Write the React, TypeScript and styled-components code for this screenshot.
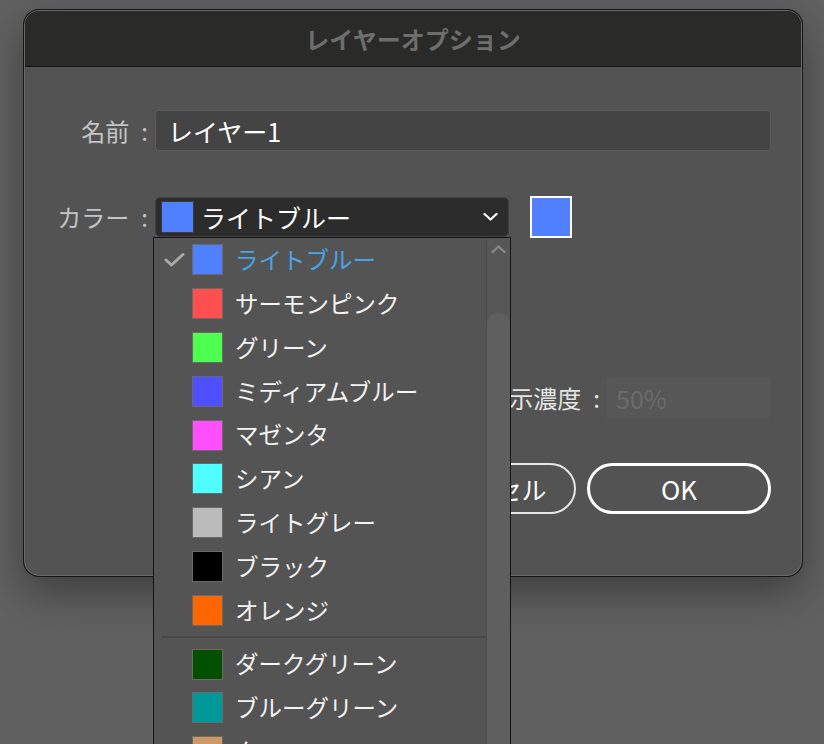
import React from 'react';
import styled, { createGlobalStyle } from 'styled-components';

interface ILayerColor {
  name: string;
  hex: string;
}

// Illustrator layer colours, split by the separator
const mainColors: ILayerColor[] = [
  { name: 'ライトブルー', hex: '#4f80ff' },
  { name: 'サーモンピンク', hex: '#ff4f4f' },
  { name: 'グリーン', hex: '#4fff4f' },
  { name: 'ミディアムブルー', hex: '#4f4fff' },
  { name: 'マゼンタ', hex: '#ff4fff' },
  { name: 'シアン', hex: '#4fffff' },
  { name: 'ライトグレー', hex: '#bbbbbb' },
  { name: 'ブラック', hex: '#000000' },
  { name: 'オレンジ', hex: '#ff6600' },
];

const extraColors: ILayerColor[] = [
  { name: 'ダークグリーン', hex: '#005000' },
  { name: 'ブルーグリーン', hex: '#009999' },
  { name: 'タン', hex: '#cc9966' },
  { name: 'ブラウン', hex: '#993300' },
];

const selected = 'ライトブルー';

const Check = () => (
  <svg width='21' height='14' viewBox='0 0 21 14'>
    <polyline points='2,7 7.5,12 19,1.5' fill='none' stroke='#a9a9a9' strokeWidth='3' strokeLinecap='round' strokeLinejoin='round' />
  </svg>
);

const Chevron = ({ up, color }: { up?: boolean; color: string }) => (
  <svg width='15' height='8' viewBox='0 0 15 8'>
    <polyline
      points={up ? '1.5,7 7.5,1.5 13.5,7' : '1.5,1 7.5,6.5 13.5,1'}
      fill='none'
      stroke={color}
      strokeWidth='2.2'
      strokeLinecap='round'
      strokeLinejoin='round'
    />
  </svg>
);

const ColorItem = ({ name, hex }: ILayerColor) => {
  const active = name === selected;
  return (
    <Item>
      <CheckSlot>{active && <Check />}</CheckSlot>
      <ItemSwatch $color={hex} />
      <ItemLabel $active={active}>{name}</ItemLabel>
    </Item>
  );
};

const CheckOption = ({ label }: { label: string }) => (
  <OptionLabel>
    <CheckBox />
    {label}
  </OptionLabel>
);

const App = () => {
  return (
    <>
      <GlobalStyle />
      <Page>
        <Dialog>
          <TitleBar>レイヤーオプション</TitleBar>
          <Body>
            <FieldRow>
              <FieldLabel>名前{'\u2002'}:</FieldLabel>
              <TextInput readOnly value='レイヤー1' />
            </FieldRow>
            <FieldRow $gap={45}>
              <FieldLabel>カラー{'\u2002'}:</FieldLabel>
              <SelectWrap>
                <Select>
                  <SelectSwatch />
                  <SelectText>ライトブルー</SelectText>
                  <SelectArrow>
                    <Chevron color='#ffffff' />
                  </SelectArrow>
                </Select>
                <Dropdown>
                  <List>
                    {mainColors.map((c) => (
                      <ColorItem key={c.name} {...c} />
                    ))}
                    <Separator />
                    {extraColors.map((c) => (
                      <ColorItem key={c.name} {...c} />
                    ))}
                  </List>
                  <Track>
                    <TrackArrow>
                      <Chevron up color='#8a8a8a' />
                    </TrackArrow>
                    <Thumb />
                  </Track>
                </Dropdown>
              </SelectWrap>
              <ColorChip />
            </FieldRow>
            <Options>
              <OptionRow>
                <CheckOption label='テンプレート' />
                <CheckOption label='ロック' />
              </OptionRow>
              <OptionRow>
                <CheckOption label='表示' />
                <CheckOption label='プリント' />
              </OptionRow>
            </Options>
            <DimRow>
              <CheckOption label='プレビュー' />
              <DimGroup>
                <CheckBox />
                <DimLabel>画像の表示濃度{'\u2002'}:</DimLabel>
                <DimInput readOnly value='50%' />
              </DimGroup>
            </DimRow>
            <Buttons>
              <PillButton $primary={false}>キャンセル</PillButton>
              <PillButton $primary>OK</PillButton>
            </Buttons>
          </Body>
        </Dialog>
      </Page>
    </>
  );
};

const GlobalStyle = createGlobalStyle`
  html, body {
    margin: 0;
    padding: 0;
    height: 100%;
    overflow: hidden;
  }
  body {
    background: #616161;
    font-family: 'Noto Sans CJK JP', 'Noto Sans', sans-serif;
  }
  * {
    box-sizing: border-box;
  }
`;

const Page = styled.div`
  padding: 10px 0 0 24px;
`;

const Dialog = styled.div`
  position: relative;
  width: 778px;
  height: 566px;
  background: #535353;
  border: 1px solid #6a6a6a;
  border-radius: 15px;
  box-shadow: 0 0 0 1px #161616, 0 16px 44px rgba(0, 0, 0, 0.38);
`;

const TitleBar = styled.div`
  height: 56px;
  display: flex;
  align-items: center;
  justify-content: center;
  background: #2a2a28;
  border-bottom: 1px solid #111;
  border-radius: 14px 14px 0 0;
  color: #6e6e6e;
  font-size: 24px;
  font-weight: 700;
`;

const Body = styled.div`
  padding: 43px 30px 0 0;
`;

const FieldRow = styled.div<{ $gap?: number }>`
  display: flex;
  align-items: center;
  gap: 7px;
  margin-top: ${({ $gap }) => $gap ?? 0}px;
`;

const FieldLabel = styled.div`
  width: 123px;
  text-align: right;
  font-size: 24px;
  line-height: 1;
  color: #c4c4c4;
  white-space: nowrap;
`;

const TextInput = styled.input`
  flex: 1;
  height: 41px;
  padding: 0 12px;
  background: #444444;
  border: 1px solid #5b5b5b;
  border-radius: 4px;
  color: #ffffff;
  font-family: inherit;
  font-size: 25px;
  outline: none;
`;

const SelectWrap = styled.div`
  position: relative;
  width: 354px;
`;

const Select = styled.div`
  display: flex;
  align-items: center;
  height: 40px;
  padding: 0 10px 0 5px;
  background: #2c2c2c;
  border: 1px solid #424242;
  border-radius: 5px;
`;

const SelectSwatch = styled.span`
  width: 33px;
  height: 32px;
  background: #4f80ff;
  border: 1px solid #3a3a3a;
`;

const SelectText = styled.span`
  margin-left: 7px;
  font-size: 25px;
  line-height: 1;
  color: #ffffff;
`;

const SelectArrow = styled.span`
  display: flex;
  margin-left: auto;
`;

const ColorChip = styled.div`
  width: 42px;
  height: 42px;
  margin-left: 14px;
  background: #5080ff;
  border: 2px solid #ffffff;
`;

const Dropdown = styled.div`
  position: absolute;
  z-index: 10;
  top: 100%;
  left: -2px;
  width: 358px;
  height: 520px;
  display: flex;
  background: #545454;
  border: 1px solid #141414;
  border-bottom: none;
`;

const List = styled.div`
  flex: 1;
`;

const Item = styled.div`
  display: flex;
  align-items: center;
  height: 43.8px;
  padding-left: 10px;
`;

const CheckSlot = styled.span`
  display: flex;
  width: 28px;
`;

const ItemSwatch = styled.span<{ $color: string }>`
  width: 31px;
  height: 31px;
  background: ${({ $color }) => $color};
  border: 1px solid #6a6a6a;
`;

const ItemLabel = styled.span<{ $active: boolean }>`
  margin-left: 12px;
  font-size: 23.5px;
  line-height: 1;
  color: ${({ $active }) => ($active ? '#4aa3e6' : '#f2f2f2')};
  white-space: nowrap;
`;

const Separator = styled.div`
  height: 2px;
  margin: 4px 0 4px 8px;
  background: #474747;
`;

const Track = styled.div`
  width: 24px;
  display: flex;
  flex-direction: column;
  background: #575757;
  border-left: 1px solid #4c4c4c;
`;

const TrackArrow = styled.div`
  display: flex;
  justify-content: center;
  padding-top: 7px;
  height: 20px;
`;

const Thumb = styled.div`
  flex: 1;
  margin-top: 55px;
  background: #5f5f5f;
  border-radius: 11px 11px 0 0;
`;

const Options = styled.div`
  display: flex;
  flex-direction: column;
  gap: 15px;
  margin: 14px 0 0 130px;
`;

const OptionRow = styled.div`
  display: grid;
  grid-template-columns: 215px 1fr;
  height: 30px;
`;

const OptionLabel = styled.label`
  display: flex;
  align-items: center;
  gap: 8px;
  font-size: 23px;
  line-height: 1;
  color: #e4e4e4;
  white-space: nowrap;
`;

const CheckBox = styled.span`
  width: 20px;
  height: 20px;
  flex: none;
  background: #3b3b3b;
  border: 1px solid #6a6a6a;
  border-radius: 3px;
`;

const DimRow = styled.div`
  display: flex;
  align-items: center;
  height: 42px;
  margin: 50px 0 0 130px;
`;

const DimGroup = styled.div`
  display: flex;
  align-items: center;
  margin-left: auto;
`;

const DimLabel = styled.span`
  margin: 0 6px 0 8px;
  font-size: 24px;
  line-height: 1;
  color: #e4e4e4;
  white-space: nowrap;
`;

const DimInput = styled.input`
  width: 165px;
  height: 42px;
  padding: 0 10px;
  background: #575757;
  border: none;
  border-radius: 4px;
  color: #6b6b6b;
  font-family: inherit;
  font-size: 25px;
  outline: none;
`;

const Buttons = styled.div`
  display: flex;
  justify-content: flex-end;
  gap: 11px;
  margin-top: 44px;
`;

const PillButton = styled.button<{ $primary: boolean }>`
  width: 184px;
  height: 51px;
  background: transparent;
  border: ${({ $primary }) => ($primary ? '3px solid #ffffff' : '2px solid #e6e6e6')};
  border-radius: 26px;
  color: #ffffff;
  font-family: inherit;
  font-size: ${({ $primary }) => ($primary ? 26 : 25)}px;
`;

export default App;
